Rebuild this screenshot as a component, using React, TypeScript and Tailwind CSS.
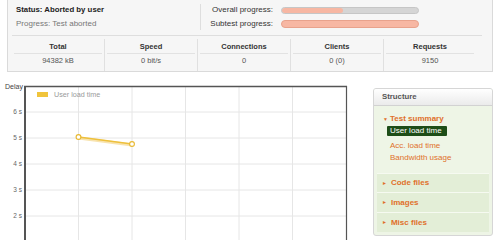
import React from "react";

const cols = [
  { h: "Total", v: "94382 kB" },
  { h: "Speed", v: "0 bit/s" },
  { h: "Connections", v: "0" },
  { h: "Clients", v: "0 (0)" },
  { h: "Requests", v: "9150" },
];

function Chart() {
  const hLines = [40, 66, 92, 118, 144, 170];
  const labels = ["6 s", "5 s", "4 s", "3 s", "2 s", ""];
  const vLines = [78.5, 132, 185.5, 239, 292.5];
  return (
    <svg width="360" height="168" viewBox="0 0 360 168" className="shrink-0">
      {hLines.map((y, i) => (
        <g key={y}>
          <line x1="25" x2="346" y1={y} y2={y} stroke="#e6e6e6" strokeWidth="1" />
          {labels[i] && (
            <text x="22" y={y + 2.3} textAnchor="end" fontSize="6.5" fill="#666" fontFamily="Liberation Sans, Arial, sans-serif">
              {labels[i]}
            </text>
          )}
        </g>
      ))}
      {vLines.map((x) => (
        <line key={x} x1={x} x2={x} y1="14" y2="168" stroke="#e6e6e6" strokeWidth="1" />
      ))}
      <text x="5" y="16.5" fontSize="7" fill="#444" fontFamily="Liberation Sans, Arial, sans-serif">
        Delay
      </text>
      <line x1="25" x2="25" y1="14" y2="168" stroke="#555" strokeWidth="2" />
      <line x1="24" x2="347" y1="14.5" y2="14.5" stroke="#555" strokeWidth="1.5" />
      <line x1="346.5" x2="346.5" y1="14" y2="168" stroke="#555" strokeWidth="1.2" />
      <rect x="37" y="20" width="11" height="5" fill="#f0c43c" />
      <text x="54" y="25.3" fontSize="7.2" fill="#9a9a9a" fontFamily="Liberation Sans, Arial, sans-serif">
        User load time
      </text>
      <line x1="78.5" y1="66" x2="132" y2="73" stroke="#f4d27a" strokeWidth="3" opacity="0.6" />
      <line x1="78.5" y1="65" x2="132" y2="72" stroke="#eec03c" strokeWidth="1.6" />
      <circle cx="78.5" cy="65" r="2.4" fill="#fff" stroke="#e8b830" strokeWidth="1.1" />
      <circle cx="132" cy="72" r="2.4" fill="#fff" stroke="#e8b830" strokeWidth="1.1" />
    </svg>
  );
}

function Structure() {
  return (
    <div className="ml-[13px] mt-[16px] w-[120px] h-[148px] border border-[#d6d6d6] rounded-[3px] bg-[#eef5e6] flex flex-col overflow-hidden">
      <div className="h-[17px] shrink-0 bg-gradient-to-b from-white to-[#ebebeb] border-b border-[#d2d2d2] flex items-center pl-[8px] text-[7.8px] font-bold text-[#555]">
        Structure
      </div>
      <div className="flex flex-col px-[3px]">
        <div className="h-[67px] flex flex-col pt-[8px]">
          <div className="h-[10px] flex items-center text-[8px] font-bold text-[#e0702a]">
            <span className="text-[5px] w-[7px] pl-[6px] mr-[4px] leading-none">▼</span>
            <span className="ml-[2px]">Test summary</span>
          </div>
          <div className="mt-[2px] ml-[10px] h-[10px] w-[60px] bg-[#1d4d17] rounded-[1px] text-white text-[8px] flex items-center pl-[3px]">
            User load time
          </div>
          <div className="mt-[5px] ml-[13px] h-[10px] flex items-center text-[8px] text-[#e0702a]">Acc. load time</div>
          <div className="mt-[2px] ml-[13px] h-[10px] flex items-center text-[8px] text-[#e0702a]">Bandwidth usage</div>
        </div>
        {["Code files", "Images", "Misc files"].map((t, i) => (
          <div
            key={t}
            className={`${i === 0 ? "h-[19px]" : "h-[20px]"} border-t border-[#f6faf1] bg-[#e3eed7] flex items-center text-[8px] font-bold text-[#e0702a]`}
          >
            <span className="text-[5px] pl-[5px] mr-[4px] leading-none">►</span>
            {t}
          </div>
        ))}
      </div>
    </div>
  );
}

export default function App() {
  return (
    <div className="w-[500px] h-[240px] overflow-hidden bg-white font-['Liberation_Sans',Arial,sans-serif]">
      <div className="mx-[7px] h-[72px] border border-t-0 border-[#dadada] bg-[#f6f6f6] flex flex-col">
        <div className="h-[35px] flex">
          <div className="w-[192px] pl-[8px] pt-[5px] flex flex-col">
            <div className="h-[10px] flex items-center text-[7.8px] font-bold text-[#222]">Status: Aborted by user</div>
            <div className="h-[10px] mt-[4px] flex items-center text-[8px] text-[#777]">Progress: Test aborted</div>
          </div>
          <div className="w-px bg-[#dedede] mt-[4px] h-[26px]" />
          <div className="flex pt-[5px]">
            <div className="w-[72px] flex flex-col items-end">
              <div className="h-[10px] flex items-center text-[8px] text-[#333]">Overall progress:</div>
              <div className="h-[10px] mt-[4px] flex items-center text-[8px] text-[#333]">Subtest progress:</div>
            </div>
            <div className="ml-[8px] w-[138px] flex flex-col">
              <div className="h-[10px] flex items-center">
                <div className="w-full h-[7px] rounded-full bg-[#d5d5d5] border border-[#c6c6c6] overflow-hidden">
                  <div className="h-full w-[45%] bg-[#f7b7a3] rounded-full" />
                </div>
              </div>
              <div className="h-[10px] mt-[4px] flex items-center">
                <div className="w-full h-[8px] rounded-full bg-[#f7b7a3] border border-[#e8a28c]" />
              </div>
            </div>
          </div>
        </div>
        <div className="ml-[4px] mr-[10px] h-px bg-[#dedede]" />
        <div className="ml-[4px] w-[464px] flex h-[35px]">
          {cols.map((c, i) => (
            <div key={c.h} className={`flex-1 flex flex-col ${i > 0 ? "border-l border-[#e0e0e0]" : ""} mt-[3px]`}>
              <div className="h-[15px] flex items-center justify-center text-[7.5px] font-bold text-[#333] border-b border-[#e2e2e2] mx-[2px] pt-[2px]">
                {c.h}
              </div>
              <div className="h-[14px] flex items-center justify-center text-[7.5px] text-[#555]">{c.v}</div>
            </div>
          ))}
        </div>
      </div>
      <div className="flex">
        <Chart />
        <Structure />
      </div>
    </div>
  );
}
